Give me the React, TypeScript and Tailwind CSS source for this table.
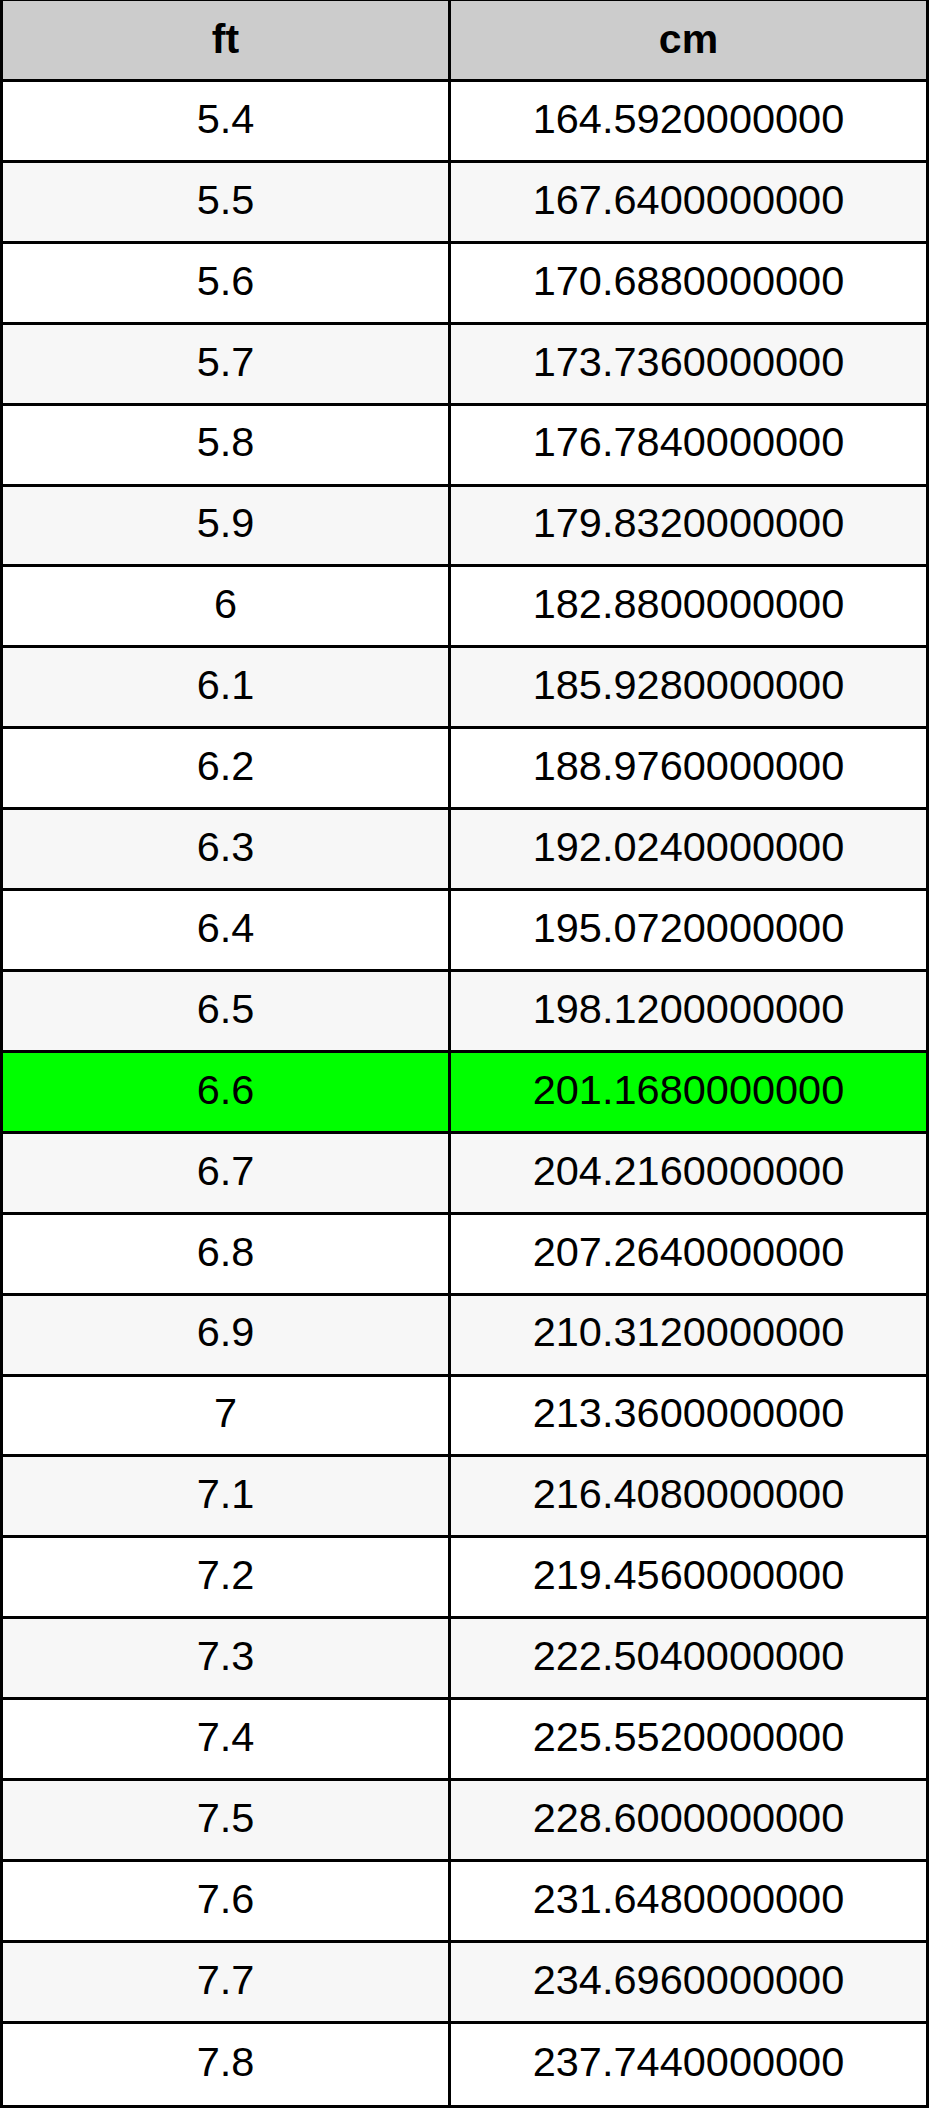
import React from "react";

const rows: [string, string][] = [
  ["5.4", "164.5920000000"],
  ["5.5", "167.6400000000"],
  ["5.6", "170.6880000000"],
  ["5.7", "173.7360000000"],
  ["5.8", "176.7840000000"],
  ["5.9", "179.8320000000"],
  ["6", "182.8800000000"],
  ["6.1", "185.9280000000"],
  ["6.2", "188.9760000000"],
  ["6.3", "192.0240000000"],
  ["6.4", "195.0720000000"],
  ["6.5", "198.1200000000"],
  ["6.6", "201.1680000000"],
  ["6.7", "204.2160000000"],
  ["6.8", "207.2640000000"],
  ["6.9", "210.3120000000"],
  ["7", "213.3600000000"],
  ["7.1", "216.4080000000"],
  ["7.2", "219.4560000000"],
  ["7.3", "222.5040000000"],
  ["7.4", "225.5520000000"],
  ["7.5", "228.6000000000"],
  ["7.6", "231.6480000000"],
  ["7.7", "234.6960000000"],
  ["7.8", "237.7440000000"],
];

export default function App() {
  return (
    <div className="w-[930px] min-h-[2115px] bg-white font-['Liberation_Sans',Arial,sans-serif] text-black">
      <div className="w-[929px] border-x-[3px] border-t-[1px] border-b-[3px] border-black">
        <div className="grid grid-cols-[448px_1fr] h-[81px] bg-[#cccccc] font-bold text-[41px] border-b-[3px] border-black">
          <div className="flex items-center justify-center border-r-[3px] border-black">ft</div>
          <div className="flex items-center justify-center">cm</div>
        </div>
        {rows.map(([ft, cm], i) => {
          const hl = ft === "6.6";
          const bg = hl ? "bg-[#00ff00]" : i % 2 === 0 ? "bg-white" : "bg-[#f7f7f7]";
          const last = i === rows.length - 1;
          return (
            <div
              key={ft}
              className={`grid grid-cols-[448px_1fr] h-[80.92px] text-[41.5px] ${bg} ${last ? "" : "border-b-[3px] border-black"}`}
            >
              <div className="flex items-center justify-center pb-[4px] border-r-[3px] border-black">{ft}</div>
              <div className="flex items-center justify-center pb-[4px]">{cm}</div>
            </div>
          );
        })}
      </div>
    </div>
  );
}
